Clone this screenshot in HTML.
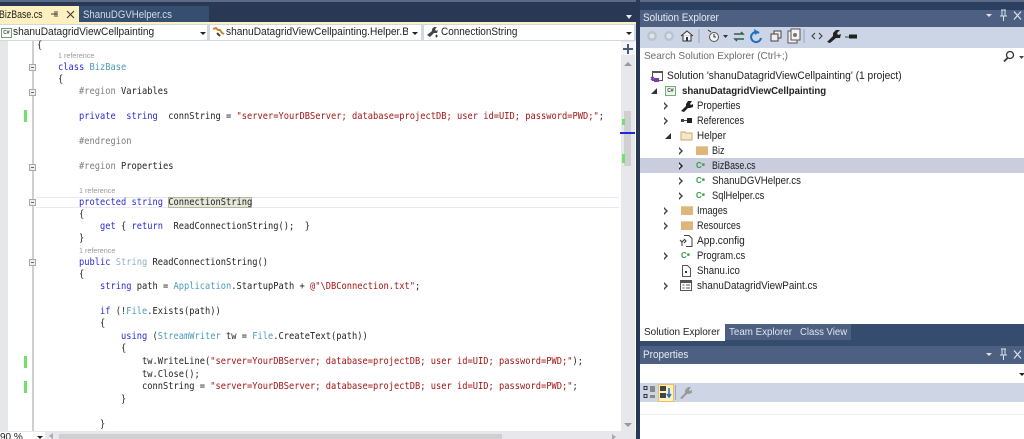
<!DOCTYPE html>
<html><head><meta charset="utf-8">
<style>
html,body{margin:0;padding:0;width:1024px;height:439px;overflow:hidden;background:#293955}
#r{position:relative;width:1024px;height:439px;overflow:hidden;font-family:"Liberation Sans",sans-serif;filter:blur(.3px)}
.a{position:absolute}
.x{transform-origin:0 50%;white-space:pre}
.c{position:absolute;margin-top:1px;white-space:pre;font:8.72px/12px "DejaVu Sans Mono",monospace;color:#222;height:12px;transform:scaleY(1.08)}
.k{color:#2b2bd8}.t{color:#4a9db5}.s{color:#a31515}.g{color:#808080}.u{color:#8fb0c0}
.ref{position:absolute;font:7.2px/10px "Liberation Sans",sans-serif;color:#999}
.o{position:absolute;left:29px;width:7px;height:7px;box-sizing:border-box;border:1px solid #a8a8a8;background:#eee}
.o:after{content:"";position:absolute;left:1px;top:2px;width:3px;height:1px;background:#666}
.m{position:absolute;left:24px;width:3px;height:12px;background:#6ee26a}
.n{position:absolute;font-size:10.6px;line-height:15px;height:15px;color:#222;white-space:pre;transform-origin:0 50%}
.ar{position:absolute;width:0;height:0;border-top:4px solid transparent;border-bottom:4px solid transparent;border-left:4px solid #444}
.ar:after{content:"";position:absolute;left:-4px;top:-2.5px;border-top:2.5px solid transparent;border-bottom:2.5px solid transparent;border-left:2.5px solid #fff}
.ex{position:absolute;width:0;height:0;border-left:6px solid transparent;border-bottom:6px solid #333}
.cs{position:absolute;font:bold 8px/10px "Liberation Sans",sans-serif;color:#3c9a46}
.dd{position:absolute;width:0;height:0;border-left:3px solid transparent;border-right:3px solid transparent;border-top:3px solid #222}
.fo{position:absolute;width:12px;height:9px;background:#dcb67a;border-top:1px solid #e9cfa0;box-sizing:border-box}
</style></head><body><div id="r">

<!-- top chrome -->
<div class="a" style="left:0;top:0;width:1024px;height:2px;background:#5b6a86"></div>
<div class="a" style="left:0;top:6px;width:79px;height:17px;background:#fff0c0"></div>
<div class="a x" style="left:-1px;top:7px;font-size:11px;line-height:16px;color:#222;transform:scaleX(.8)">BizBase.cs</div>
<svg class="a" style="left:50px;top:9px" width="28" height="12"><path d="M3 5h4M5 2v6M1 5h2M7 2v6" stroke="#444" fill="none"/><path d="M17 2l7 7M24 2l-7 7" stroke="#444" stroke-width="1.2"/></svg>
<div class="a" style="left:79px;top:6px;width:130px;height:17px;background:#364e6f"></div>
<div class="a x" style="left:83px;top:7px;font-size:10.6px;line-height:16px;color:#d5dcea;transform:scaleX(.91)">ShanuDGVHelper.cs</div>
<div class="dd" style="left:626px;top:15px;border-top-color:#e8ecf4;border-left-width:3.5px;border-right-width:3.5px;border-top-width:4px"></div>
<div class="a" style="left:0;top:22px;width:636px;height:2px;background:#fff0c0"></div>

<!-- combos -->
<div class="a" style="left:0;top:24px;width:636px;height:18px;background:#d0d7e5"></div>
<div class="a" style="left:0;top:25px;width:207px;height:15px;background:#fff"></div>
<div class="a" style="left:210px;top:25px;width:211px;height:15px;background:#fff"></div>
<div class="a" style="left:424px;top:25px;width:210px;height:15px;background:#fff"></div>
<div class="a" style="left:1px;top:28px;width:9px;height:8px;border:1px solid #6f9f70;font:bold 5px/8px 'Liberation Sans',sans-serif;color:#444;text-align:center">C#</div>
<div class="a x" style="left:13px;top:25px;font-size:10.6px;line-height:15px;color:#222;transform:scaleX(.96)">shanuDatagridViewCellpainting</div>
<div class="dd" style="left:200px;top:32px"></div>
<svg class="a" style="left:212px;top:26px" width="13" height="13"><path d="M1 3l3-1 2 2 2 0 2 3 2 1" stroke="#c98a2e" stroke-width="2" fill="none"/><path d="M5 7l3 3" stroke="#444" stroke-width="2"/></svg>
<div class="a" style="left:226px;top:25px;width:182px;overflow:hidden;height:15px"><div class="x" style="font-size:10.6px;line-height:15px;color:#222;transform:scaleX(.96)">shanuDatagridViewCellpainting.Helper.BizBase</div></div>
<div class="dd" style="left:412px;top:32px"></div>
<svg class="a" style="left:426px;top:26px" width="13" height="13"><path d="M1 9l5-4 0-2 2-2 3 0-2 2 1 2 2-1-1 3-3 0-4 4z" fill="#444"/><path d="M9 10h3M10.500 8.500v3" stroke="#444"/></svg>
<div class="a x" style="left:441px;top:25px;font-size:10.6px;line-height:15px;color:#222;transform:scaleX(.94)">ConnectionString</div>
<div class="dd" style="left:626px;top:32px"></div>

<!-- editor -->
<div class="a" style="left:0;top:41px;width:636px;height:390px;background:#fff"></div>
<div class="a" style="left:0;top:41px;width:8px;height:390px;background:#e6e7e8"></div>
<div class="a" style="left:32px;top:41px;width:2px;height:390px;background:#cfcfcf"></div>
<div class="a" style="left:36px;top:197px;width:583px;height:1px;background:#e8e8f0"></div>
<div class="a" style="left:36px;top:207px;width:583px;height:1px;background:#e8e8f0"></div>
<div class="a" style="left:168px;top:197px;width:84px;height:11px;background:#e6e8dc;outline:1px solid #b0b8a0;outline-offset:-1px"></div>

<div class="o" style="top:64px"></div><div class="o" style="top:89px"></div><div class="o" style="top:164px"></div><div class="o" style="top:199px"></div><div class="o" style="top:259px"></div>
<div class="m" style="top:110px"></div><div class="m" style="top:356px"></div><div class="m" style="top:381px"></div>

<div class="c" style="left:37px;top:39px">{</div>
<div class="ref" style="left:58px;top:51px">1 reference</div>
<div class="c" style="left:58px;top:61px"><span class="k">class</span> <span class="t">BizBase</span></div>
<div class="c" style="left:58px;top:73px">{</div>
<div class="c" style="left:79px;top:85px"><span class="g">#region</span> Variables</div>
<div class="c" style="left:79px;top:110px"><span class="k">private</span>  <span class="k">string</span>  connString = <span class="s">"server=YourDBServer; database=projectDB; user id=UID; password=PWD;"</span>;</div>
<div class="c" style="left:79px;top:135px"><span class="g">#endregion</span></div>
<div class="c" style="left:79px;top:160px"><span class="g">#region</span> Properties</div>
<div class="ref" style="left:79px;top:186px">1 reference</div>
<div class="c" style="left:79px;top:196px"><span class="k">protected</span> <span class="k">string</span> ConnectionString</div>
<div class="c" style="left:79px;top:208px">{</div>
<div class="c" style="left:100px;top:220px"><span class="k">get</span> { <span class="k">return</span>  ReadConnectionString();  }</div>
<div class="c" style="left:79px;top:232px">}</div>
<div class="ref" style="left:79px;top:246px">1 reference</div>
<div class="c" style="left:79px;top:256px"><span class="k">public</span> <span class="u">String</span> ReadConnectionString()</div>
<div class="c" style="left:79px;top:268px">{</div>
<div class="c" style="left:100px;top:280px"><span class="k">string</span> path = <span class="t">Application</span>.StartupPath + <span class="s">@"\DBConnection.txt"</span>;</div>
<div class="c" style="left:100px;top:305px"><span class="k">if</span> (!<span class="t">File</span>.Exists(path))</div>
<div class="c" style="left:100px;top:317px">{</div>
<div class="c" style="left:121px;top:330px"><span class="k">using</span> (<span class="t">StreamWriter</span> tw = <span class="t">File</span>.CreateText(path))</div>
<div class="c" style="left:121px;top:342px">{</div>
<div class="c" style="left:142px;top:355px">tw.WriteLine(<span class="s">"server=YourDBServer; database=projectDB; user id=UID; password=PWD;"</span>);</div>
<div class="c" style="left:142px;top:368px">tw.Close();</div>
<div class="c" style="left:142px;top:380px">connString = <span class="s">"server=YourDBServer; database=projectDB; user id=UID; password=PWD;"</span>;</div>
<div class="c" style="left:121px;top:393px">}</div>
<div class="c" style="left:100px;top:418px">}</div>

<!-- v scrollbar -->
<div class="a" style="left:621px;top:41px;width:14px;height:390px;background:#e8e8ec"></div>
<div class="a" style="left:621px;top:42px;width:14px;height:13px;background:#f4f5f8"></div>
<svg class="a" style="left:622px;top:43px" width="12" height="12"><path d="M1 6h10M6 1v10" stroke="#4a5a70" stroke-width="2"/></svg>
<div class="a" style="left:624px;top:62px;width:0;height:0;border-left:4px solid transparent;border-right:4px solid transparent;border-bottom:4px solid #999"></div>
<div class="a" style="left:624px;top:111px;width:7px;height:55px;background:#d0d0d3"></div>
<div class="a" style="left:622px;top:119px;width:3px;height:6px;background:#74e06e"></div>
<div class="a" style="left:622px;top:154px;width:3px;height:9px;background:#74e06e"></div>
<div class="a" style="left:620px;top:132px;width:15px;height:1.500px;background:#1c2ad0"></div>
<div class="a" style="left:624px;top:423px;width:0;height:0;border-left:4px solid transparent;border-right:4px solid transparent;border-top:4px solid #999"></div>

<!-- bottom bar -->
<div class="a" style="left:0;top:431px;width:636px;height:8px;background:#e8e8ec"></div>
<div class="a" style="left:0;top:432px;width:45px;height:7px;background:#fff;overflow:hidden;font-size:10px;line-height:14px;color:#222;white-space:pre"><div style="margin-top:-1px">90 %</div></div>
<div class="dd" style="left:37px;top:436px"></div>
<div class="a" style="left:49px;top:433px;width:0;height:0;border-top:3px solid transparent;border-bottom:3px solid transparent;border-right:4px solid #aaa"></div>
<div class="a" style="left:59px;top:434px;width:443px;height:5px;background:#d0d0d3"></div>
<div class="a" style="left:612px;top:434px;width:0;height:0;border-top:3px solid transparent;border-bottom:3px solid transparent;border-left:4px solid #aaa"></div>

<!-- right panel -->
<div class="a" style="left:636px;top:0;width:4px;height:439px;background:#293955"></div>
<div class="a" style="left:640px;top:0;width:384px;height:346px;background:#2d3f5e"></div>
<div class="a" style="left:640px;top:0;width:384px;height:2px;background:#5b6a86"></div>
<div class="a" style="left:640px;top:10px;width:384px;height:17px;background:#4d6082"></div>
<div class="a x" style="left:643px;top:9px;font-size:10.6px;line-height:19px;color:#e8ecf4;transform:scaleX(.94)">Solution Explorer</div>
<svg class="a" style="left:985px;top:8px" width="39" height="15"><path d="M1 6h6l-3 3z" fill="#dde3ee"/><path d="M16 2h5M17 2v6h3V2M15 8h7M18.500 8v5" stroke="#dde3ee" fill="none"/><path d="M29 3.500l7 8M36 3.500l-7 8" stroke="#dde3ee" stroke-width="1.200"/></svg>

<div class="a" style="left:640px;top:27px;width:384px;height:21px;background:#ccd5e6"></div>
<svg class="a" style="left:640px;top:28px" width="230" height="20">
<circle cx="12" cy="8" r="5" fill="#bcc3ce"/><circle cx="12" cy="8" r="2.500" fill="#dfe4ec"/>
<circle cx="29" cy="8" r="5" fill="#bcc3ce"/><circle cx="29" cy="8" r="2.500" fill="#dfe4ec"/>
<path d="M41 8l6-5 6 5M43 7v6h8V7" stroke="#333" fill="#f4f4f4"/><rect x="46" y="9" width="2" height="4" fill="#333"/>
<path d="M59 1v14" stroke="#9aa4b6"/>
<circle cx="74" cy="9" r="4.500" fill="#f4f4f4" stroke="#555"/><path d="M74 6v3h2M68 2l3 2" stroke="#333" fill="none"/>
<path d="M83 7h5l-2.500 3z" fill="#333"/>
<path d="M94 6h9l-2-2M104 11h-9l2 2" stroke="#2e5f4a" stroke-width="1.500" fill="none"/>
<path d="M119 5a5 5 0 1 0 2 5" stroke="#1b6fc2" stroke-width="2" fill="none"/><path d="M114 1l5 3-4 3z" fill="#1b6fc2"/>
<rect x="134" y="3" width="7" height="7" fill="#eee" stroke="#444"/><rect x="131" y="6" width="7" height="7" fill="#eee" stroke="#444"/>
<rect x="148" y="3" width="9" height="12" fill="#f0f0f0" stroke="#555"/><rect x="151" y="1" width="9" height="11" fill="#f4f4f4" stroke="#555"/><circle cx="155" cy="7" r="2" fill="#777"/>
<path d="M164 1v14" stroke="#9aa4b6"/>
<path d="M175 5l-3 3 3 3M179 5l3 3-3 3" stroke="#333" fill="none"/>
<path d="M187 14l6-6 0-3 3-3 4 0-3 3 1 2 3-1 -1 4-4 0-6 5z" fill="#222"/>
<path d="M205 9h5" stroke="#444" stroke-width="1"/><rect x="209" y="6.500" width="8" height="4" fill="#222"/>
</svg>

<div class="a" style="left:640px;top:48px;width:384px;height:16px;background:#fff"></div>
<div class="a x" style="left:644px;top:48px;font-size:10.2px;line-height:17px;color:#6d6d6d;transform:scaleX(.98)">Search Solution Explorer (Ctrl+;)</div>
<svg class="a" style="left:1001px;top:49px" width="23" height="14"><circle cx="9" cy="6" r="3.500" fill="none" stroke="#333" stroke-width="1.300"/><path d="M6.500 9L3 12.500" stroke="#333" stroke-width="1.800"/><path d="M18 7h5l-2.500 3z" fill="#444"/></svg>

<div class="a" style="left:640px;top:64px;width:384px;height:260px;background:#fff"></div>
<div class="a" style="left:640px;top:158px;width:384px;height:15px;background:#c9cddd"></div>

<svg class="a" style="left:650px;top:70px" width="14" height="13"><rect x="2.500" y="1.500" width="10" height="9" fill="#fff" stroke="#555"/><rect x="2" y="1" width="11" height="2" fill="#555"/><path d="M1 7l3 3M4 7l-3 3" stroke="#7a3fa8" stroke-width="1.500"/><rect x="4" y="8" width="5" height="4" fill="#7a3fa8"/></svg>
<div class="n" style="left:667px;top:69px;transform:scaleX(.966)">Solution 'shanuDatagridViewCellpainting' (1 project)</div>

<div class="ex" style="left:651px;top:88px"></div>
<div class="a" style="left:665px;top:86px;width:9px;height:8px;background:#eef5ee;border:1px solid #6fae74;font:bold 5px/8px 'Liberation Sans',sans-serif;color:#444;text-align:center">C#</div>
<div class="n" style="left:682px;top:84px;font-weight:bold;font-size:10.4px;transform:scaleX(.926)">shanuDatagridViewCellpainting</div>

<div class="ar" style="left:664px;top:102px"></div>
<svg class="a" style="left:680px;top:100px" width="13" height="13"><path d="M1 11l5-5 0-2 2-3 4 0-2 3 1 1 2-1 0 3-3 1-2 0-4 4z" fill="#222"/></svg>
<div class="n" style="left:697px;top:99px;transform:scaleX(.9)">Properties</div>

<div class="ar" style="left:664px;top:117px"></div>
<svg class="a" style="left:680px;top:116px" width="13" height="10"><rect x="1" y="3" width="3" height="3" fill="#444"/><path d="M4 4.500h3" stroke="#444"/><rect x="7" y="2" width="5" height="5" fill="#222"/></svg>
<div class="n" style="left:697px;top:114px;transform:scaleX(.87)">References</div>

<div class="ex" style="left:665px;top:133px"></div>
<svg class="a" style="left:680px;top:129px" width="14" height="12"><path d="M1 3h4l1 1h6v7H1z" fill="#f4e6c8" stroke="#cfa868"/></svg>
<div class="n" style="left:697px;top:129px;transform:scaleX(.93)">Helper</div>

<div class="ar" style="left:679px;top:147px"></div>
<div class="fo" style="left:696px;top:146px"></div>
<div class="n" style="left:712px;top:144px;transform:scaleX(.85)">Biz</div>

<div class="ar" style="left:679px;top:162px;border-left-color:#222"></div>
<div class="cs" style="left:696px;top:160px">C<span style="font-size:5px;vertical-align:2px">■</span></div>
<div class="n" style="left:712px;top:159px;transform:scaleX(.83)">BizBase.cs</div>

<div class="ar" style="left:679px;top:177px"></div>
<div class="cs" style="left:696px;top:175px">C<span style="font-size:5px;vertical-align:2px">■</span></div>
<div class="n" style="left:712px;top:174px;transform:scaleX(.91)">ShanuDGVHelper.cs</div>

<div class="ar" style="left:679px;top:192px"></div>
<div class="cs" style="left:696px;top:190px">C<span style="font-size:5px;vertical-align:2px">■</span></div>
<div class="n" style="left:712px;top:189px;transform:scaleX(.88)">SqlHelper.cs</div>

<div class="ar" style="left:664px;top:207px"></div>
<div class="fo" style="left:681px;top:206px"></div>
<div class="n" style="left:697px;top:204px;transform:scaleX(.88)">Images</div>

<div class="ar" style="left:664px;top:222px"></div>
<div class="fo" style="left:681px;top:221px"></div>
<div class="n" style="left:697px;top:219px;transform:scaleX(.86)">Resources</div>

<svg class="a" style="left:679px;top:234px" width="15" height="14"><path d="M5 1.500h5l3 3v8H7" fill="none" stroke="#444"/><path d="M1 6l2 2 2-2M3 8v4M5 5l2 2-2 2" stroke="#333" fill="none"/></svg>
<div class="n" style="left:697px;top:234px;transform:scaleX(.955)">App.config</div>

<div class="ar" style="left:664px;top:252px"></div>
<div class="cs" style="left:681px;top:250px">C<span style="font-size:5px;vertical-align:2px">■</span></div>
<div class="n" style="left:697px;top:249px;transform:scaleX(.89)">Program.cs</div>

<svg class="a" style="left:680px;top:264px" width="13" height="14"><path d="M2.500 1.500h5l3 3v8h-8z" fill="#fff" stroke="#555"/><rect x="5" y="7" width="2" height="2" fill="#333"/></svg>
<div class="n" style="left:697px;top:264px;transform:scaleX(.91)">Shanu.ico</div>

<div class="ar" style="left:664px;top:282px"></div>
<svg class="a" style="left:680px;top:280px" width="13" height="12"><rect x=".5" y=".5" width="11" height="10" fill="#fff" stroke="#555"/><rect x="1" y="1" width="10" height="2" fill="#555"/><path d="M2.500 5h2M6 5h4M2.500 8h2M6 8h4" stroke="#555"/></svg>
<div class="n" style="left:697px;top:279px;transform:scaleX(.93)">shanuDatagridViewPaint.cs</div>

<!-- tabs -->
<div class="a" style="left:640px;top:324px;width:384px;height:22px;background:#364c6e"></div>
<div class="a" style="left:640px;top:324px;width:85px;height:17px;background:#fff"></div>
<div class="a x" style="left:644px;top:324px;font-size:10.4px;line-height:17px;color:#222;transform:scaleX(.96)">Solution Explorer</div>
<div class="a" style="left:725px;top:324px;width:126px;height:16px;background:#4d6082"></div>
<div class="a x" style="left:729px;top:325px;font-size:10.4px;line-height:16px;color:#e0e6f0;transform:scaleX(.94)">Team Explorer</div>
<div class="a x" style="left:800px;top:325px;font-size:10.4px;line-height:16px;color:#e0e6f0;transform:scaleX(.92)">Class View</div>

<!-- properties -->
<div class="a" style="left:640px;top:346px;width:384px;height:93px;background:#fff"></div>
<div class="a" style="left:640px;top:346px;width:384px;height:18px;background:#4d6082"></div>
<div class="a x" style="left:643px;top:346px;font-size:10.6px;line-height:18px;color:#e8ecf4;transform:scaleX(.94)">Properties</div>
<svg class="a" style="left:985px;top:347px" width="39" height="15"><path d="M1 6h6l-3 3z" fill="#dde3ee"/><path d="M16 2h5M17 2v6h3V2M15 8h7M18.500 8v5" stroke="#dde3ee" fill="none"/><path d="M29 3.500l7 8M36 3.500l-7 8" stroke="#dde3ee" stroke-width="1.200"/></svg>
<div class="dd" style="left:1019px;top:373px"></div>
<div class="a" style="left:640px;top:383px;width:384px;height:19px;background:#ced5e5"></div>
<div class="a" style="left:658px;top:384px;width:14px;height:16px;background:#fdf0c0;border:1px solid #e8c060"></div>
<svg class="a" style="left:643px;top:385px" width="60" height="16">
<rect x="1" y="1.500" width="3" height="3" fill="none" stroke="#333"/><rect x="1" y="9.500" width="3" height="3" fill="none" stroke="#333"/><path d="M7 1h5v6H7zM7 10h5v3H7z" fill="#888"/>
<rect x="17" y="1" width="6" height="5" fill="#444"/><rect x="17" y="8" width="6" height="5" fill="#444"/><path d="M26 3v8M24 9l2 3 2-3" stroke="#1b6fc2" stroke-width="1.500" fill="none"/>
<path d="M32.500 0v15" stroke="#a0a8b8"/>
<path d="M37 13l5-5 0-3 3-3 3 0-2 3 1 1 2-1 0 3-3 1-2 0-5 5z" fill="#9a9a9a"/>
</svg>
<div class="a" style="left:640px;top:414px;width:384px;height:1px;background:#eef0f4"></div>

</div></body></html>
